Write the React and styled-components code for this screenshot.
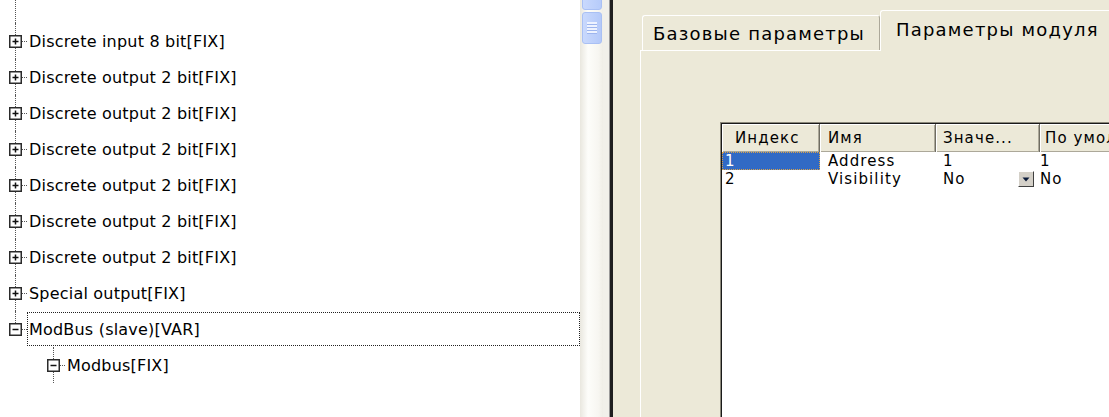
import styled, { createGlobalStyle } from "styled-components";

const GlobalStyle = createGlobalStyle`
  html, body {
    margin: 0;
    padding: 0;
    overflow: hidden;
    background: #fff;
  }
  body {
    font-family: "DejaVu Sans", Verdana, sans-serif;
    color: #000;
  }
`;

const treeNodes = [
  { label: "Discrete input 8 bit[FIX]", level: 0 },
  { label: "Discrete output 2 bit[FIX]", level: 0 },
  { label: "Discrete output 2 bit[FIX]", level: 0 },
  { label: "Discrete output 2 bit[FIX]", level: 0 },
  { label: "Discrete output 2 bit[FIX]", level: 0 },
  { label: "Discrete output 2 bit[FIX]", level: 0 },
  { label: "Discrete output 2 bit[FIX]", level: 0 },
  { label: "Special output[FIX]", level: 0 },
  { label: "ModBus (slave)[VAR]", level: 0, open: true, focused: true, last: true },
  { label: "Modbus[FIX]", level: 1, open: true },
];

// width, header text inset, cell text inset
const columns = [
  { title: "Индекс", width: 98, headPad: 13, cellPad: 3 },
  { title: "Имя", width: 116, headPad: 8, cellPad: 8 },
  { title: "Значе...", width: 104, headPad: 7, cellPad: 7 },
  { title: "По умолчанию", width: 160, headPad: 5, cellPad: 0 },
];

const params = [
  { index: "1", name: "Address", value: "1", def: "1" },
  { index: "2", name: "Visibility", value: "No", def: "No", combo: true },
];

function Expander({ open }) {
  return (
    <svg width="13" height="13" viewBox="0 0 13 13">
      <rect x="0.75" y="0.75" width="11.5" height="11.5" fill="#fff" stroke="#2b2b2b" strokeWidth="1.5" />
      <path d="M3.5 6.5h6" stroke="#111" strokeWidth="1.5" />
      {!open && <path d="M6.5 3.5v6" stroke="#111" strokeWidth="1.5" />}
    </svg>
  );
}

function ComboArrow() {
  return (
    <svg width="8" height="5" viewBox="0 0 8 5">
      <path d="M0.5 0.5h7L4 4.5z" fill="#0a1a3a" />
    </svg>
  );
}

function App() {
  return (
    <>
      <GlobalStyle />
      <Window>
        <TreePane>
          <TreeLead />
          {treeNodes.map((node, i) => (
            <TreeRow key={i} $level={node.level}>
              <Gutter>
                <Rail />
                <Expander open={node.open} />
                <Rail $hidden={node.last} />
              </Gutter>
              <Connector />
              <NodeLabel $focused={node.focused}>{node.label}</NodeLabel>
            </TreeRow>
          ))}
        </TreePane>

        <ScrollTrack>
          <ScrollButton />
          <ScrollThumb>
            <Grip />
          </ScrollThumb>
        </ScrollTrack>
        <Splitter />

        <RightPane>
          <TabStrip>
            <Tab>Базовые параметры</Tab>
            <Tab $active>Параметры модуля</Tab>
          </TabStrip>
          <TabPanel>
            <ListView>
              {columns.map((col) => (
                <HeaderCell key={col.title} $pad={col.headPad}>
                  {col.title}
                </HeaderCell>
              ))}
              {params.map((p) => (
                <Row key={p.index}>
                  <Cell $pad={columns[0].cellPad} $selected={p.index === "1"}>
                    {p.index}
                  </Cell>
                  <Cell $pad={columns[1].cellPad}>{p.name}</Cell>
                  <Cell $pad={columns[2].cellPad}>
                    {p.value}
                    {p.combo && (
                      <ComboButton>
                        <ComboArrow />
                      </ComboButton>
                    )}
                  </Cell>
                  <Cell $pad={columns[3].cellPad}>{p.def}</Cell>
                </Row>
              ))}
            </ListView>
          </TabPanel>
        </RightPane>
      </Window>
    </>
  );
}

const Window = styled.div`
  display: flex;
  width: 1109px;
  height: 417px;
  overflow: hidden;
`;

const TreePane = styled.div`
  width: 580px;
  flex-shrink: 0;
  background: #fff;
  display: flex;
  flex-direction: column;
`;

const TreeLead = styled.div`
  height: 23px;
  flex-shrink: 0;
  margin-left: 15px;
  border-left: 1px dotted #555;
`;

const TreeRow = styled.div`
  display: flex;
  align-items: center;
  height: 36px;
  flex-shrink: 0;
  padding-left: ${(p) => 9 + p.$level * 38}px;
`;

const Gutter = styled.div`
  width: 13px;
  height: 100%;
  display: flex;
  flex-direction: column;
  align-items: center;

  svg {
    display: block;
    flex-shrink: 0;
  }
`;

const Rail = styled.div`
  flex: 1;
  width: 0;
  border-left: 1px dotted ${(p) => (p.$hidden ? "transparent" : "#555")};
`;

const Connector = styled.div`
  width: 5px;
  border-top: 1px dotted #555;
`;

const NodeLabel = styled.div`
  flex: 1;
  height: 32px;
  display: flex;
  align-items: center;
  padding: 0 1px;
  font-size: 16px;
  letter-spacing: 0.2px;
  white-space: nowrap;
  border: 1px dotted ${(p) => (p.$focused ? "#222" : "transparent")};
`;

const ScrollTrack = styled.div`
  width: 23px;
  flex-shrink: 0;
  display: flex;
  flex-direction: column;
  align-items: center;
  gap: 2px;
  background: linear-gradient(to right, #e9e7df, #fdfdfa 35%, #f7f6f1 80%, #efeee7);
`;

const ScrollButton = styled.div`
  width: 20px;
  height: 22px;
  margin-top: -12px;
  border: 1px solid #a9c0f4;
  border-radius: 3px;
  background: linear-gradient(to right, #c9d9fd, #b6cbfa);
  box-sizing: border-box;
`;

const ScrollThumb = styled.div`
  width: 20px;
  height: 32px;
  border: 1px solid #a9c0f4;
  border-radius: 3px;
  background: linear-gradient(to right, #c9d9fd, #b4c9f9);
  box-sizing: border-box;
  display: flex;
  align-items: center;
  justify-content: center;
`;

const Grip = styled.div`
  width: 10px;
  height: 12px;
  background: repeating-linear-gradient(to bottom, #eef3ff 0 2px, #9db5ee 2px 3px);
`;

const Splitter = styled.div`
  width: 11px;
  flex-shrink: 0;
  background: #f1f0ea;
  box-shadow: inset -1px 0 #ece9d8, inset -4px 0 #1e1e1e, inset -5px 0 #9a9a9a;
`;

const RightPane = styled.div`
  flex: 1;
  min-width: 0;
  background: #ece9d8;
  display: flex;
  flex-direction: column;
  padding: 10px 0 0 26px;
  overflow: hidden;
`;

const TabStrip = styled.div`
  display: flex;
  align-items: flex-end;
  height: 40px;
  padding-left: 2px;
`;

const Tab = styled.div`
  position: relative;
  z-index: ${(p) => (p.$active ? 1 : 0)};
  height: ${(p) => (p.$active ? 41 : 35)}px;
  margin-bottom: ${(p) => (p.$active ? -1 : 0)}px;
  padding: ${(p) => (p.$active ? "0 12px 3px 15px" : "0 14px 0 10px")};
  display: flex;
  align-items: center;
  box-sizing: border-box;
  white-space: nowrap;
  font-size: 18px;
  letter-spacing: 1.2px;
  background: #ece9d8;
  border-top: 1px solid #fff;
  border-left: 1px solid #fff;
  border-right: 1px solid #aca899;
  border-radius: 3px 3px 0 0;
`;

const TabPanel = styled.div`
  flex: 1;
  border-top: 1px solid #fff;
  border-left: 1px solid #fff;
  padding: 71px 0 0 79px;
`;

const ListView = styled.div`
  display: grid;
  grid-template-columns: ${columns.map((c) => `${c.width}px`).join(" ")};
  grid-template-rows: 28px;
  grid-auto-rows: 18px;
  align-content: start;
  height: 400px;
  background: #fff;
  border-top: 1px solid #8b887a;
  border-left: 1px solid #8b887a;
  box-shadow: inset 1px 1px #1a1a1a;
  padding: 1px 0 0 1px;
  font-size: 15px;
  letter-spacing: 1.1px;
`;

const HeaderCell = styled.div`
  display: flex;
  align-items: center;
  padding-left: ${(p) => p.$pad}px;
  white-space: nowrap;
  overflow: hidden;
  background: #ece9d8;
  box-shadow: inset 1px 1px #fff, inset -1px -1px #aca899;
  border-right: 1px solid #6f6d62;
`;

const Row = styled.div`
  display: contents;
`;

const Cell = styled.div`
  display: flex;
  align-items: center;
  justify-content: space-between;
  padding-left: ${(p) => p.$pad}px;
  white-space: nowrap;
  background: ${(p) => (p.$selected ? "#316ac5" : "transparent")};
  color: ${(p) => (p.$selected ? "#fff" : "#000")};
  outline: ${(p) => (p.$selected ? "1px dotted #d9a24a" : "none")};
  outline-offset: -1px;
`;

const ComboButton = styled.div`
  width: 16px;
  height: 16px;
  margin-right: 6px;
  box-sizing: border-box;
  display: flex;
  align-items: center;
  justify-content: center;
  background: #d4d0c8;
  border-top: 1px solid #fff;
  border-left: 1px solid #fff;
  border-right: 1px solid #404040;
  border-bottom: 1px solid #404040;
`;

export default App;
